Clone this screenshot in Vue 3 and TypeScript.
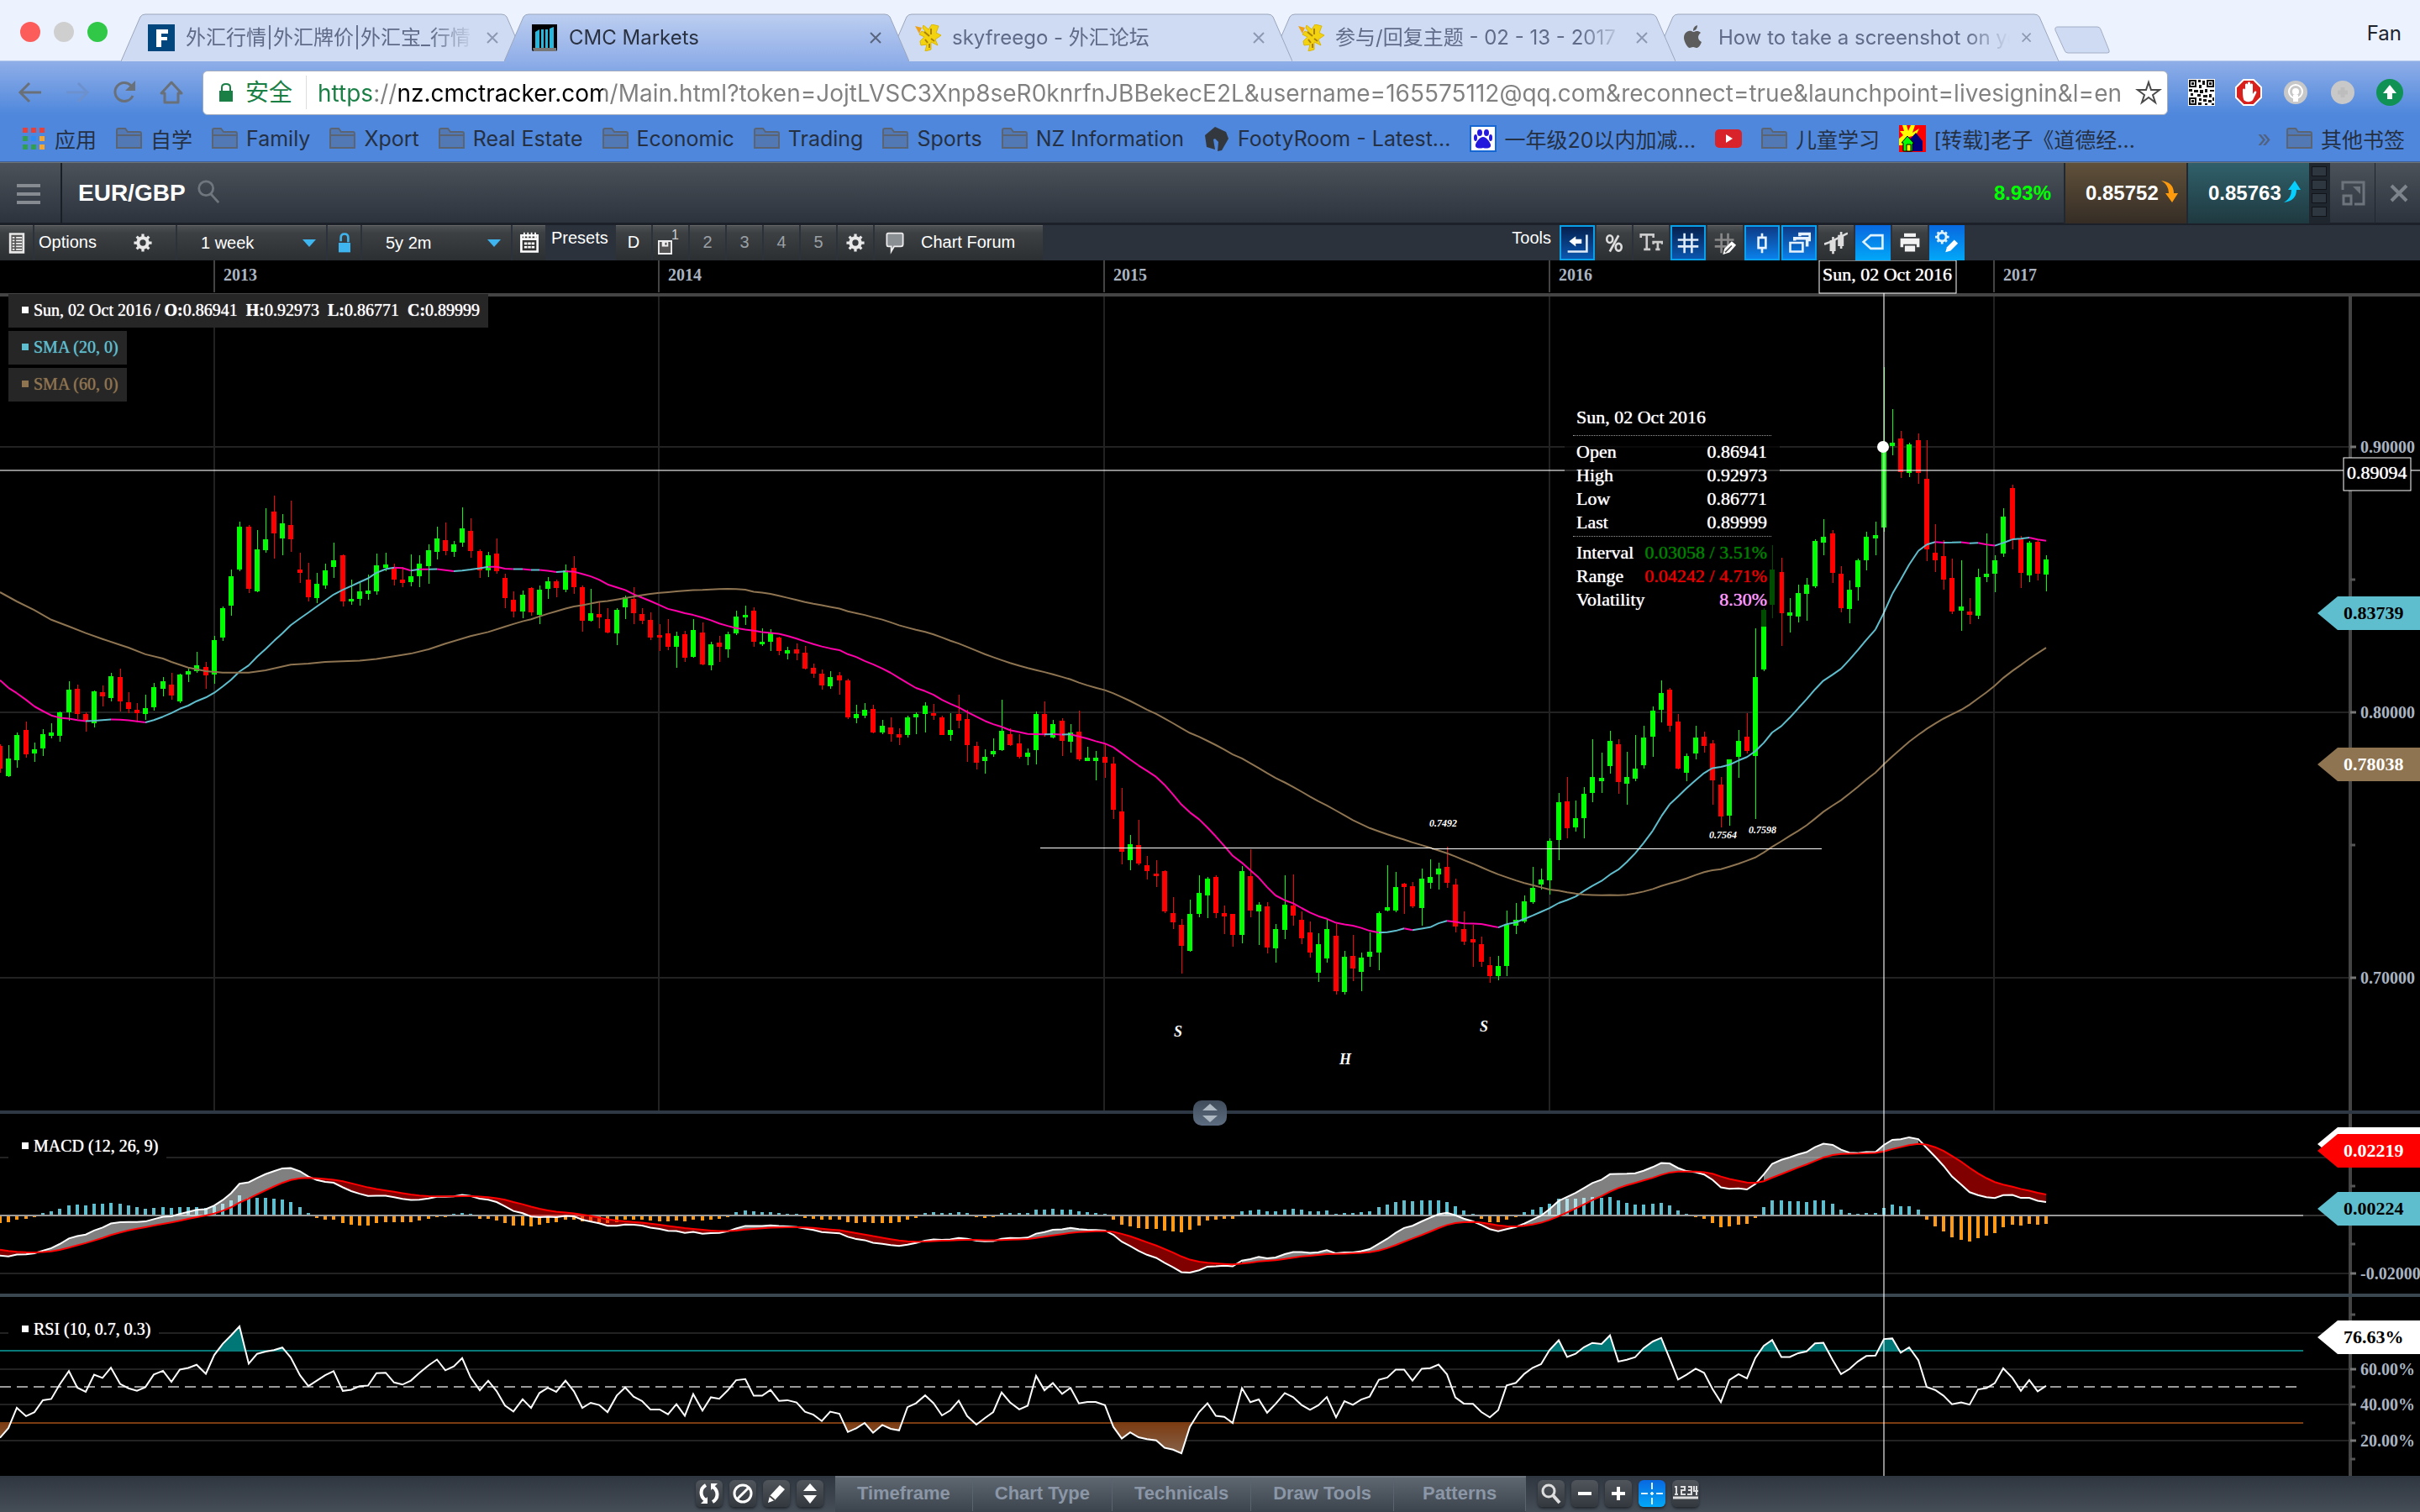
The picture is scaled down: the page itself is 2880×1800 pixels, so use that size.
<script setup lang="ts">
import { ref } from 'vue'

interface Candle { up: boolean; high: number; top: number; bottom: number; low: number; close: number }
interface Series { base: number; scale: number; rows: string }

const STEP = 10.19
const PERIODS = { fast: 12, slow: 26, signal: 9, rsi: 10 }

/* Weekly candles: direction, high, body top, body bottom, low */
const series: Series[] = [
  {
    base: 340, scale: 620 / 1568,
    rows: `r 1380 1385 1455 1468;g 1383 1425 1477 1480;g 1345 1353 1430 1452;r 1313 1338 1411 1421;g 1376 1396 1409 1434;g 1335 1350 1394 1416;g 1318 1345 1356 1362;g 1282 1285 1355 1374;g 1191 1216 1286 1310;r 1202 1215 1291 1305;
r 1286 1290 1313 1344;g 1220 1222 1318 1330;r 1203 1223 1237 1266;g 1166 1176 1242 1252;r 1152 1179 1252 1282;r 1224 1254 1274 1287;r 1258 1277 1287 1316;g 1232 1271 1290 1308;g 1197 1210 1269 1279;g 1178 1190 1214 1237;
r 1165 1201 1233 1247;g 1168 1170 1253 1256;g 1153 1161 1170 1194;g 1103 1144 1162 1166;r 1133 1148 1174 1215;g 1055 1066 1172 1200;g 966 971 1059 1070;g 856 874 964 994;g 711 726 855 861;r 722 727 914 925;
g 737 795 921 922;g 671 765 797 803;r 632 680 746 823;g 689 715 762 812;r 648 722 764 802;r 803 855 865 895;r 835 885 938 951;g 865 899 941 956;g 836 857 903 914;g 774 826 847 880;
r 810 812 950 965;g 885 943 952 961;g 892 921 943 963;g 871 918 928 946;g 806 843 921 931;g 804 840 850 860;r 837 850 885 904;r 848 885 895 908;g 809 876 892 905;g 812 838 874 908;
g 779 797 844 898;g 727 762 802 824;r 714 766 799 812;g 770 779 802 818;g 667 732 774 787;r 700 738 800 820;r 795 800 857 880;g 802 812 857 878;r 762 807 860 868;r 868 880 941 970;
r 921 947 980 998;g 917 930 982 1001;r 908 910 983 994;g 903 916 992 1018;g 877 890 912 943;r 886 891 911 938;g 840 857 916 924;r 815 851 908 928;r 903 908 1008 1043;g 913 986 1009 1012;
r 953 990 999 1031;r 970 1004 1044 1046;g 971 976 1048 1082;g 932 938 969 1004;r 909 943 986 1019;r 970 989 1010 1020;r 984 1007 1060 1067;r 1018 1051 1060 1099`,
  },
  {
    base: 600, scale: 700 / 1568,
    rows: `r 307 345 381 389;g 341 352 380 436;r 338 347 410 421;g 307 337 408 411;r 316 342 427 430;g 368 373 430 443;r 352 370 381 420;g 341 347 388 410;g 284 301 346 349;g 271 296 302 323;
r 276 284 367 381;g 332 367 375 378;g 334 346 367 391;r 353 357 392 403;g 380 390 398 414;r 371 388 399 416;r 379 396 439 441;r 426 437 452 464;r 441 452 483 496;g 446 461 486 493;
r 449 458 470 508;r 467 471 570 574;g 535 561 571 584;g 530 549 564 571;r 535 547 609 611;g 576 591 610 614;r 569 596 614 634;r 598 614 623 643;g 565 569 616 622;g 556 559 569 614;
g 529 538 559 609;r 534 557 565 576;r 565 569 615 616;g 558 603 616 632;r 508 559 579 597;r 549 573 643 688;r 633 645 690 707;g 653 674 685 719;g 625 659 668 675;g 522 604 656 659;
r 597 614 643 646;r 614 639 674 679;g 652 664 674 697;g 554 560 656 694;r 526 561 617 620;g 576 587 622 626;r 571 578 632 672;g 587 609 634 664;r 551 607 681 686;g 647 676 685 686;
g 659 676 685 736;r 639 674 690 731;r 674 692 815 840;r 757 820 928 960;g 883 908 950 976;r 843 909 959 964;r 938 964 979 1001;r 949 985 993 1022;r 976 979 1086 1090;r 1049 1090 1116 1133;
r 1107 1122 1178 1252;g 1055 1094 1192 1193;g 990 1036 1093 1102;g 994 998 1044 1105`,
  },
  {
    base: 860, scale: 1 / 3,
    rows: `r 547 553 681 698;r 654 681 692 755;r 684 685 760 800;g 514 532 760 789;r 453 548 672 697;g 643 651 676 795;r 643 658 803 826;g 721 738 806 859;g 546 650 740 773;r 543 654 690 725;
r 674 706 770 792;r 711 751 822 839;g 753 793 893 926;g 704 738 842 859;r 719 762 960 971;g 815 838 963 973;r 759 835 880 925;g 822 840 891 960;g 750 819 837 874;g 676 682 822 886;
g 510 661 673 676;g 535 588 672 678;r 573 577 588 684;r 571 585 657 663;g 523 557 663 725;g 490 551 573 594;g 502 521 542 597;r 444 515 573 590;r 557 579 730 751;r 674 739 783 795;
r 722 775 786 872;r 766 793 856 873;r 837 867 906 930;g 834 871 906 920;g 672 724 871 906;g 646 706 727 756;g 618 640 711 716;g 517 591 642 648;g 523 561 579 597`,
  },
  {
    base: 400, scale: 700 / 1568,
    rows: `g 1339 1346 1451 1489;g 1219 1244 1343 1398;r 1175 1240 1313 1339;g 1239 1285 1310 1322;g 1203 1221 1285 1339;g 1075 1175 1219 1243;g 1111 1179 1188 1219;g 1053 1080 1146 1166;r 1076 1089 1190 1221;g 1109 1175 1193 1249;
g 1065 1154 1181 1188;g 1040 1071 1144 1154;g 987 998 1069 1122;g 918 953 997 1030;r 939 942 1040 1055;r 1007 1029 1154 1156;g 1114 1119 1164 1188;g 1040 1071 1113 1130;r 1054 1069 1093 1111;r 1078 1087 1186 1251;
r 1177 1196 1282 1310;g 1128 1130 1279 1305;g 1051 1080 1123 1178;r 1006 1069 1107 1114;g 779 909 1120 1287;g 725 730 889 893;g 558 622 717 752;r 592 630 739 826;g 699 738 746 790;g 664 686 749 764;
g 645 663 687 759;g 541 546 668 672;g 489 535 550 585;r 517 526 631 659;r 613 635 725 738;g 652 676 728 767;g 594 597 670 706;g 522 535 597 624;g 495 531 540 585;g 83 295 511 522;
g 194 284 293 318;r 253 273 363 379;g 284 289 364 376;r 260 277 365 394;r 277 380 570 600;r 502 578 597 629;r 545 587 650 676;r 594 646 735 741;g 597 722 732 787;r 698 735 743 768;
g 620 642 747 754;g 526 633 643 656;g 585 598 634 684;g 459 482 581 588;r 396 405 541 570;r 533 540 632 671;g 546 551 638 656;r 541 548 634 652;g 585 595 636 680`,
  },
]

const candles: Candle[] = series.flatMap(({ base, scale, rows }) =>
  rows.split(';').map((row) => {
    const [dir, ...values] = row.trim().split(' ')
    const [high, top, bottom, low] = values.map((v) => Math.round(base + Number(v) * scale))
    const up = dir === 'g'
    return { up, high, top, bottom, low, close: base + Number(values[up ? 1 : 2]) * scale }
  }),
)
const closes = candles.map((c) => c.close)
const xAt = (i: number) => Math.round(i * STEP)

const candlePath = (up: boolean) =>
  candles.map((c, i) => c.up === up
    ? `M${xAt(i) - 3} ${c.top}h6V${Math.max(c.bottom, c.top + 3)}h-6zM${xAt(i)} ${c.high}h1V${c.low}h-1z` : '').join('')
const risingCandles = candlePath(true)
const fallingCandles = candlePath(false)

/* Moving averages: the first bars come from history that lies before the visible range */
const lead = (v: number) => 340 + v * 620 / 1568
const sma20Lead = [1188, 1211, 1227, 1247, 1267, 1281, 1294, 1301, 1304, 1308, 1311, 1310, 1308, 1306, 1307, 1309, 1312, 1315, 1308].map(lead)
const sma60Lead: [number, number][] = [[0, 923], [2, 951], [4, 977], [6, 1006], [8, 1026], [10, 1046], [12, 1064], [14, 1082], [15, 1090], [17, 1110], [19, 1123], [20, 1133], [22, 1150], [24, 1161], [26, 1165], [29, 1165], [31, 1158], [34, 1141], [36, 1138], [38, 1133], [42, 1129], [44, 1124], [46, 1116], [48, 1108], [50, 1095], [52, 1078], [55, 1055], [57, 1043]]
const average = (i: number, n: number) => closes.slice(i - n + 1, i + 1).reduce((a, b) => a + b, 0) / n
const at = (i: number, y: number) => `${xAt(i)} ${y.toFixed(1)}`

const sma20 = closes.map((_, i) => (i < 19 ? sma20Lead[i] : average(i, 20)))
const smaPath = (rising: boolean) =>
  sma20.slice(1).map((y, i) => (y <= sma20[i]) === rising ? `M${at(i, sma20[i])}L${at(i + 1, y)}` : '').join('')
const smaUp = smaPath(true)
const smaDown = smaPath(false)
const sma60 = [
  ...sma60Lead.map(([i, v]) => at(i, lead(v))),
  ...closes.map((_, i) => i).slice(59).map((i) => at(i, average(i, 60))),
].join(' ')

/* MACD */
const ZERO = 1447
const GAIN = 1.087
let fast = 851
let slow = 807
let sig = 37.4
const macd: number[] = []
const signal: number[] = []
closes.forEach((y, i) => {
  if (i) {
    fast += (y - fast) * 2 / (PERIODS.fast + 1)
    slow += (y - slow) * 2 / (PERIODS.slow + 1)
    sig += (fast - slow - sig) * 2 / (PERIODS.signal + 1)
  }
  macd.push(ZERO + (fast - slow) * GAIN)
  signal.push(ZERO + sig * GAIN)
})
const macdLine = macd.map((y, i) => at(i, y)).join(' ')
const signalLine = signal.map((y, i) => at(i, y)).join(' ')
let gainArea = ''
let lossArea = ''
for (let i = 1; i < macd.length; i++) {
  const a = macd[i - 1] - signal[i - 1]
  const b = macd[i] - signal[i]
  if (a * b >= 0) {
    const quad = `M${at(i - 1, macd[i - 1])}L${at(i, macd[i])}L${at(i, signal[i])}L${at(i - 1, signal[i - 1])}z`
    if (a + b < 0) gainArea += quad
    else lossArea += quad
  }
}
const bars = (positive: boolean) => macd.map((y, i) => {
  const d = signal[i] - y
  const h = Math.ceil(Math.abs(d)) + 1
  return (d > 0) === positive ? `M${xAt(i) - 2} ${ZERO}h4v${positive ? -h : h}h-4z` : ''
}).join('')
const positiveBars = bars(true)
const negativeBars = bars(false)

/* RSI, Wilder smoothing */
let avgGain = 3.84
let avgLoss = 13.95
const rsi = closes.map((y, i) => {
  if (i) {
    const change = closes[i - 1] - y
    avgGain += (Math.max(change, 0) - avgGain) / PERIODS.rsi
    avgLoss += (Math.max(-change, 0) - avgLoss) / PERIODS.rsi
  }
  return 1651 - (avgGain / (avgGain + avgLoss) * 100 - 50) * 2.137
})
const rsiLine = rsi.map((y, i) => at(i, y)).join(' ')
const rsiArea = `0 1651 ${rsiLine} ${xAt(239)} 1651`

const years = [[255, 2013], [784, 2014], [1314, 2015], [1844, 2016], [2373, 2017]]
const axis = [
  [532, '0.90000'], [848, '0.80000'], [1164, '0.70000'], [1516, '-0.02000'],
  [1630, '60.00%'], [1672, '40.00%'], [1715, '20.00%'],
] as [number, string][]
const minorTicks = [690, 1006, 1412, 1481, 1565, 1651, 1694, 1737]
const tags = [
  { y: 730, fill: '#5fbecd', ink: '#000', text: '0.83739' },
  { y: 910, fill: '#8e7450', ink: '#fff', text: '0.78038' },
  { y: 1362, fill: '#fff', ink: '#fff', text: '' },
  { y: 1370, fill: '#f00', ink: '#fff', text: '0.02219' },
  { y: 1439, fill: '#5fbecd', ink: '#000', text: '0.00224' },
  { y: 1592, fill: '#fff', ink: '#000', text: '76.63%' },
]
const quote = [['Open', '0.86941'], ['High', '0.92973'], ['Low', '0.86771'], ['Last', '0.89999']]
const stats = [['Interval', '0.03058 / 3.51%', 'green'], ['Range', '0.04242 / 4.71%', 'red'], ['Volatility', '8.30%', 'pink']]

/* Icons, drawn on a 32 unit square */
const gear = '<circle cx="16" cy="16" r="7" fill="none" stroke="#e8e8e8" stroke-width="5"/><path d="M16 3v5M16 24v5M3 16h5M24 16h5M7 7l3 3M22 22l3 3M25 7l-3 3M10 22l-3 3" stroke="#e8e8e8" stroke-width="4"/>'
const coin = '<path fill="#f3d210" stroke="#d9b70a" d="M11 1l6 5 4-6 8 2-3 8 6 3-7 5 3 7-8-4v9l-7 2 2-8-7 1-1-5 5-5-6-3 3-4 5 2-4-6z"/><path fill="#f0a010" d="M1 2l8 2-3 7z"/><path stroke="#a98204" stroke-width="2" d="M12 9l6 5M20 5v7M13 18l3 4M20 17l4 3M18 23v5"/>'
const icons: Record<string, string> = {
  gear,
  fx: '<path fill="#01467c" d="M0 0h32v32H0z"/><path fill="#fff" d="M10 6h14v5h-8v4h7v4h-7v8h-6z"/>',
  cmc: '<path fill="#000" d="M1 0h30v30q0 2-2 2H3q-2 0-2-2z"/><path fill="#777" d="M2 28h28v4H3z"/><path fill="#29b6dc" d="M5 9l5-3v22H5zM12 6h3v22h-3zM17 6h3v22h-3zM22 5l5-2v25h-5z"/>',
  coin,
  apple: '<path fill="#5c5c5c" d="M16 9c2-1 5-2 8 1-5 4-3 9 1 11-2 5-4 7-6 7-2 0-2-1-4-1s-3 1-4 1c-3 0-7-8-7-12 0-7 6-9 9-8 2 1 2 1 3 1zM15 8c0-4 2-6 5-7 0 4-2 6-5 7z"/>',
  back: '<path d="M29 16H5M15 5L4 16l11 11" fill="none" stroke="#6a7078" stroke-width="3"/>',
  forward: '<path d="M3 16h24M17 5l11 11-11 11" fill="none" stroke="#6d91cd" stroke-width="3"/>',
  reload: '<path d="M26 20A11 11 0 1 1 24 8" fill="none" stroke="#6a7078" stroke-width="3"/><path d="M29 2v12H17z" fill="#6a7078"/>',
  home: '<path d="M16 4L4 17h4v11h16V17h4z" fill="none" stroke="#6a7078" stroke-width="3" stroke-linejoin="round"/>',
  star: '<path d="M16 4l3 9h10l-8 6 3 9-8-6-8 6 3-9-8-6h10z" fill="none" stroke="#4a4a4a" stroke-width="2"/>',
  qr: '<path fill="#fff" d="M0 0h32v32H0z"/><path fill="#111" fill-rule="evenodd" d="M1 1h9v9H1zm2 2v5h5V3zM22 1h9v9h-9zm2 2v5h5V3zM1 22h9v9H1zm2 2v5h5v-5zM4 4h3v3H4zM25 4h3v3h-3zM4 25h3v3H4zM12 1h3v3h-3zM17 2h3v5h-3zM13 7h3v4h-3zM1 12h4v3H1zM7 13h5v3H7zM3 17h3v3H3zM14 13h4v4h-4zM20 12h3v4h-3zM26 13h5v2h-5zM11 18h4v3h-4zM18 19h5v3h-5zM25 18h3v4h-3zM29 22h2v4h-2zM13 23h3v3h-3zM18 24h4v3h-4zM24 25h4v3h-4zM12 28h4v3h-4zM20 29h3v2h-3zM28 29h3v2h-3z"/>',
  hand: '<path fill="#d8201c" stroke="#fff" stroke-width="2" d="M10 1h12l9 9v12l-9 9H10l-9-9V10z"/><path fill="#fff" d="M9 13c0-2 3-2 3 0v3V7c0-2 3-2 3 0v7V5c0-2 3-2 3 0v9V7c0-2 3-2 3 0v11l2-3c2-1 3 0 2 2l-4 8c-2 3-10 3-11-1-1-3-1-7-1-11z"/>',
  beacon: '<circle cx="16" cy="16" r="14" fill="#c8c8c8"/><circle cx="16" cy="15" r="8" fill="none" stroke="#fff" stroke-width="2"/><circle cx="16" cy="15" r="4" fill="#fff"/><path d="M13 19h6v8h-6z" fill="#fff"/>',
  blank: '<circle cx="16" cy="16" r="14" fill="#c8c8c8"/><path d="M16 10v12M10 16h12" stroke="#bdbdbd" stroke-width="5"/>',
  up: '<circle cx="16" cy="16" r="16" fill="#0f9254"/><path d="M16 7l8 10h-5v7h-6v-7H8z" fill="#fff"/>',
  apps: '<path fill="#e8413a" d="M3 3h6v6H3zM13 3h6v6h-6zM23 3h6v6h-6z"/><path fill="#30a050" d="M3 13h6v6H3zM3 23h6v6H3zM13 23h6v6h-6z"/><path fill="#2b8cf4" d="M13 13h6v6h-6z"/><path fill="#f4a72c" d="M23 13h6v6h-6zM23 23h6v6h-6z"/>',
  folder: '<path d="M1 27V6q0-2 2-2h8l3 4h14q2 0 2 2v17zM1 12h29" fill="#5379b5" stroke="#5b6473" stroke-width="2"/>',
  footy: '<path fill="#33383f" d="M14 2l13 6 3 8-8 14-5 1 1-11-4-4-2 1 2 12-10-3-2-14z"/>',
  baidu: '<path fill="#fff" stroke="#1567d3" stroke-width="2" d="M1 1h30v30H1z"/><g fill="#2319dc"><ellipse cx="12" cy="9" rx="3" ry="4"/><ellipse cx="20" cy="9" rx="3" ry="4"/><ellipse cx="7" cy="15" rx="2" ry="4"/><ellipse cx="25" cy="15" rx="2" ry="4"/><path d="M16 14c4 0 8 6 9 9 1 5-5 5-9 4-4 1-10 1-9-4 1-3 5-9 9-9z"/></g>',
  tube: '<rect x="0" y="5" width="32" height="22" rx="5" fill="#d8232a"/><path d="M13 11l8 5-8 5z" fill="#fff"/>',
  house: '<path fill="#f00" d="M0 0h32v32H0z"/><path fill="#ff0" d="M4 0h5l2 7 3-7h5l-3 9 8-5-4 8-8 2-8 10H0v-8l5-4-4-5h5z"/><path fill="#00007c" d="M12 18l8-9 8 10v12H14z"/><path fill="#0f0" stroke="#000" d="M3 21l7-8 8 9h-2v9H5V21z"/><path fill="#ff0" stroke="#000" d="M9 23h5v8H9z"/>',
  search: '<circle cx="13" cy="12" r="9" fill="none" stroke="#70767d" stroke-width="3"/><path d="M19 19l10 11" stroke="#70767d" stroke-width="3"/>',
  list: '<path d="M7 4h18v25H7z" fill="#555" stroke="#e8e8e8" stroke-width="3"/><path d="M10 9h3M10 13h3M10 17h3M10 21h3M10 25h3M15 9h8M15 13h8M15 17h8M15 21h8M15 25h8" stroke="#eee" stroke-width="2"/>',
  unlock: '<path d="M8 16h16v13H8z" fill="#3fb5f0"/><path d="M11 14V9q0-5 5-5t5 5v6" fill="none" stroke="#3fb5f0" stroke-width="3"/>',
  calendar: '<path d="M5 6h22v22H5z" fill="#333" stroke="#fff" stroke-width="3"/><path d="M9 2v8M14 2v8M19 2v8M24 2v8" stroke="#fff" stroke-width="2"/><path d="M5 11h22" stroke="#fff" stroke-width="3"/><path d="M9 17h4M14 17h4M19 17h4M9 22h4M14 22h4M19 22h4" stroke="#fff" stroke-width="3"/>',
  chat: '<path d="M5 5q0-2 2-2h18q2 0 2 2v13q0 3-3 3H15l-4 7v-7H7q-2 0-2-3z" fill="#8a8f94" stroke="#eee" stroke-width="2"/>',
  popout: '<path d="M3 12V3h25v26H17" fill="none" stroke="#6d747c" stroke-width="3"/><path d="M4 19h9v10H4z" fill="none" stroke="#6d747c" stroke-width="3"/><path d="M15 8h9v9z" fill="#6d747c"/>',
  close: '<path d="M7 7l18 18M25 7L7 25" stroke="#7d848c" stroke-width="4"/>',
  snap: '<path d="M3 28h26V5" fill="none" stroke="#dfeaf8" stroke-width="3"/><path d="M5 14l9-7v4h8v6h-8v4z" fill="#fff"/>',
  percent: '<ellipse cx="10" cy="11" rx="4" ry="5" fill="none" stroke="#ddd" stroke-width="3"/><ellipse cx="22" cy="22" rx="4" ry="5" fill="none" stroke="#ddd" stroke-width="3"/><path d="M22 6L10 28" stroke="#ddd" stroke-width="3"/>',
  type: '<path d="M2 9V5h17v4M10 5v20M6 25h9M19 18v-3h12v3M25 15v10M22 25h6" fill="none" stroke="#ccc" stroke-width="3"/>',
  grid: '<path d="M11 3v27M21 3v27M2 12h28M2 21h28" stroke="#dfeaf8" stroke-width="3"/>',
  gridPick: '<path d="M11 3v27M20 3v18M2 12h26M2 21h16" stroke="#888" stroke-width="3"/><path d="M13 32l2-8 10-10 6 5-9 10z" fill="#fff"/><path d="M16 29l9-9" stroke="#555" stroke-width="2"/>',
  candle: '<path d="M16 3v6M16 23v7M11 9h10v14H11z" fill="none" stroke="#e6f2ff" stroke-width="3"/>',
  stack: '<path d="M4 16h17v12H4z" fill="none" stroke="#e6f2ff" stroke-width="3"/><path d="M10 13v-3h17v11M17 7V4h14v10" fill="none" stroke="#e6f2ff" stroke-width="4"/>',
  compare: '<path d="M12 8v23M23 1v23M9 14h5v12H9zM20 7h5v12h-5z" fill="#3a3d40" stroke="#ddd" stroke-width="3"/><path d="M0 18l8-3 12-6 12-6" fill="none" stroke="#ddd" stroke-width="3"/>',
  label: '<path d="M13 7h16v18H13L3 16z" fill="none" stroke="#dff2ff" stroke-width="3"/>',
  print: '<path d="M8 3h16v5H8zM3 10h26v12h-4v-4H7v4H3zM9 20h14v8H9z" fill="#f2f2f2"/>',
  setup: '<g transform="translate(-1 -2) scale(.8)"><circle cx="13" cy="14" r="7" fill="none" stroke="#dff2ff" stroke-width="4"/><path d="M13 2v5M13 21v5M1 14h5M20 14h5M5 6l3 3M18 19l3 3M21 6l-3 3M8 19l-3 3" stroke="#dff2ff" stroke-width="4"/></g><path d="M14 30l2-7 10-10 5 5-10 10z" fill="#fff"/>',
  cycle: '<path d="M12 6q-7 4-5 12 1 4 5 6M20 26q7-4 5-12-1-4-5-6" fill="none" stroke="#fff" stroke-width="4"/><path d="M14 20v8H6zM18 12V4h8z" fill="#fff"/>',
  none: '<circle cx="16" cy="16" r="10" fill="none" stroke="#fff" stroke-width="3"/><path d="M9 23L23 9" stroke="#fff" stroke-width="3"/>',
  pencil: '<path d="M6 27l2-8L20 6l6 5-12 13z" fill="#fff"/><path d="M8 19l6 5" stroke="#444" stroke-width="2"/>',
  updown: '<path d="M8 13l8-9 8 9zM8 18h16l-8 10z" fill="#fff"/>',
  zoom: '<circle cx="13" cy="13" r="7" fill="none" stroke="#ddd" stroke-width="3"/><path d="M18 18l8 9" stroke="#ddd" stroke-width="4"/>',
  minus: '<path d="M8 16h16" stroke="#fff" stroke-width="4"/>',
  plus: '<path d="M8 16h16M16 8v16" stroke="#fff" stroke-width="4"/>',
  cross: '<path d="M16 3v8M16 14v4M16 21v8M3 16h8M14 16h4M21 16h8" stroke="#dff2ff" stroke-width="2"/>',
  ruler: '<path d="M1 21h30" stroke="#ddd" stroke-width="3"/><path d="M5 7v11M3 8h2M3 17h4M10 8h5v4h-4v5h5M19 8h4v9h-5M19 12h3M26 7v6h5M29 7v11" fill="none" stroke="#ddd" stroke-width="2"/>',
}

const tabs = [
  { icon: 'fx', title: '外汇行情|外汇牌价|外汇宝_行情' },
  { icon: 'cmc', title: 'CMC Markets', active: true },
  { icon: 'coin', title: 'skyfreego - 外汇论坛' },
  { icon: 'coin', title: '参与/回复主题 - 02 - 13 - 2017' },
  { icon: 'apple', title: 'How to take a screenshot on yo' },
]
const bookmarks = [
  ['apps', '应用'], ['folder', '自学'], ['folder', 'Family'], ['folder', 'Xport'], ['folder', 'Real Estate'],
  ['folder', 'Economic'], ['folder', 'Trading'], ['folder', 'Sports'], ['folder', 'NZ Information'],
  ['footy', 'FootyRoom - Latest...'], ['baidu', '一年级20以内加减...'], ['tube', ''], ['folder', '儿童学习'], ['house', '[转载]老子《道德经...'],
]
const extensions = ['qr', 'hand', 'beacon', 'blank', 'up']
const tools = [
  ['snap', 'navy'], ['percent', ''], ['type', ''], ['grid', 'navy'], ['gridPick', ''], ['candle', 'blue'],
  ['stack', 'blue'], ['compare', ''], ['label', 'sky'], ['print', ''], ['setup', 'sky'],
]
const menus = ['Timeframe', 'Chart Type', 'Technicals', 'Draw Tools', 'Patterns']
const url = ref('https://nz.cmctracker.com/Main.html?token=JojtLVSC3Xnp8seR0knrfnJBBekecE2L&username=165575112@qq.com&reconnect=true&launchpoint=livesignin&l=en')
const interval = ref('1 week')
const span = ref('5y 2m')
</script>

<template>
  <div class="window">
    <header class="browser">
      <div class="tabstrip">
        <div class="lights"><i class="red" /><i class="grey" /><i class="green" /></div>
        <nav class="tabs">
          <div v-for="(t, i) in tabs" :key="i" class="tab" :class="{ active: t.active }" :style="{ zIndex: t.active ? 9 : 8 - i }">
            <svg class="shape" viewBox="0 0 482 57" preserveAspectRatio="none">
              <defs><linearGradient id="tabfill" x2="0" y2="1"><stop stop-color="#bccef0" /><stop offset="1" stop-color="#90aee8" /></linearGradient></defs>
              <path d="M0 57L23 4Q25 1 29 1H453Q457 1 459 4L482 57" :fill="t.active ? 'url(#tabfill)' : '#cfdbf2'" stroke="#9aa6bd" stroke-width="1" />
            </svg>
            <svg class="icon" viewBox="0 0 32 32" v-html="icons[t.icon]" />
            <span class="title">{{ t.title }}</span>
            <button class="shut" aria-label="Close tab"><svg viewBox="0 0 16 16"><path d="M2 2l12 12M14 2L2 14" stroke="currentColor" stroke-width="2" /></svg></button>
          </div>
        </nav>
        <svg class="newtab" viewBox="0 0 68 34"><path d="M5 1H52Q55 1 56 4L66 29Q67 32 64 32H17Q14 32 13 29L2 5Q1 1 5 1z" fill="#cfdbf2" stroke="#a3aec4" /></svg>
        <span class="profile">Fan</span>
      </div>
      <div class="addressbar">
        <button v-for="n in ['back', 'forward', 'reload', 'home']" :key="n" class="nav" :aria-label="n"><svg class="icon" viewBox="0 0 32 32" v-html="icons[n]" /></button>
        <label class="omnibox">
          <svg class="lock" viewBox="0 0 18 24"><path d="M1 10h16v13H1z" fill="#1a7f45" /><path d="M4 11V6q0-4 5-4t5 4v5" fill="none" stroke="#1a7f45" stroke-width="2" /></svg>
          <span class="secure">安全</span>
          <input v-model="url" type="text" aria-label="Address">
          <svg class="icon" viewBox="0 0 32 32" v-html="icons.star" />
        </label>
        <div class="extensions"><svg v-for="n in extensions" :key="n" class="icon" viewBox="0 0 32 32" v-html="icons[n]" /></div>
      </div>
      <nav class="bookmarks">
        <a v-for="([icon, name], i) in bookmarks" :key="i" href="#" :aria-label="name || icon"><svg class="icon" viewBox="0 0 32 32" v-html="icons[icon]" /><span v-if="name">{{ name }}</span></a>
        <span class="more">»</span>
        <a href="#"><svg class="icon" viewBox="0 0 32 32" v-html="icons.folder" /><span>其他书签</span></a>
      </nav>
    </header>

    <main class="app">
      <div class="instrument">
        <button class="menu" aria-label="Menu"><i /><i /><i /></button>
        <h1>EUR/GBP</h1>
        <svg class="icon find" viewBox="0 0 32 32" v-html="icons.search" />
        <span class="change">8.93%</span>
        <button class="price sell">0.85752<svg viewBox="0 0 22 26"><path d="M1 0Q16 2 16 15h5l-7 11-8-11h4Q10 5 1 0z" fill="#ff9a0c" /></svg></button>
        <button class="price buy">0.85763<svg viewBox="0 0 22 26"><path d="M1 26Q16 24 16 11h5L14 0 6 11h4Q10 21 1 26z" fill="#06cfff" /></svg></button>
        <div class="slots"><i /><i /><i /><i /></div>
        <button class="win" aria-label="Pop out"><svg class="icon" viewBox="0 0 32 32" v-html="icons.popout" /></button>
        <button class="win" aria-label="Close"><svg class="icon" viewBox="0 0 32 32" v-html="icons.close" /></button>
      </div>

      <div class="toolbar">
        <button class="btn narrow" aria-label="List"><svg class="icon" viewBox="0 0 32 32" v-html="icons.list" /></button>
        <button class="btn options">Options<svg class="icon" viewBox="0 0 32 32" v-html="icons.gear" /></button>
        <div class="btn pick"><select v-model="interval" aria-label="Interval"><option>1 week</option><option>1 day</option></select><i /></div>
        <button class="btn narrow" aria-label="Unlock"><svg class="icon" viewBox="0 0 32 32" v-html="icons.unlock" /></button>
        <div class="btn pick"><select v-model="span" aria-label="Range"><option>5y 2m</option><option>1y</option></select><i /></div>
        <button class="btn narrow" aria-label="Calendar"><svg class="icon" viewBox="0 0 32 32" v-html="icons.calendar" /></button>
        <span class="caption">Presets</span>
        <button class="btn sq">D</button>
        <button class="btn sq save"><svg viewBox="0 0 18 18"><path d="M1 1h16v16H1z" fill="#555" stroke="#eee" stroke-width="2" /><path d="M5 2h8v6H5z" fill="#eee" /><path d="M10 3v3" stroke="#444" stroke-width="2" /></svg><sup>1</sup></button>
        <button v-for="n in [2, 3, 4, 5]" :key="n" class="btn sq dim">{{ n }}</button>
        <button class="btn sq" aria-label="Settings"><svg class="icon small" viewBox="0 0 32 32" v-html="icons.gear" /></button>
        <button class="btn forum"><svg class="icon" viewBox="0 0 32 32" v-html="icons.chat" />Chart Forum</button>
        <span class="caption tools">Tools</span>
        <button v-for="[n, tone] in tools" :key="n" class="btn sq" :class="tone" :aria-label="n"><svg class="icon" viewBox="0 0 32 32" v-html="icons[n]" /></button>
      </div>

      <section class="chart">
        <svg class="plot" viewBox="0 310 2880 1447">
          <defs>
            <clipPath id="over"><path d="M0 1545H2880V1608H0z" /></clipPath>
            <clipPath id="under"><path d="M0 1694H2880V1757H0z" /></clipPath>
            <linearGradient id="burn" x1="0" y1="1694" x2="0" y2="1732" gradientUnits="userSpaceOnUse"><stop stop-color="#7c3c12" /><stop offset="1" stop-color="#86644c" /></linearGradient>
            <linearGradient id="knob" x2="0" y2="1"><stop stop-color="#3f4b5a" /><stop offset="1" stop-color="#5d6c80" /></linearGradient>
          </defs>

          <g stroke="#222" stroke-width="2">
            <path v-for="y in [532, 848, 1164, 1378, 1516, 1587, 1630, 1672, 1715]" :key="y" :d="`M0 ${y}H2797`" />
            <path v-for="[x] in years" :key="x" :d="`M${x} 352V1322`" />
          </g>
          <path d="M0 351H2880" stroke="#444" stroke-width="4" />
          <g v-for="[x, y] in years" :key="y">
            <path :d="`M${x} 310V348`" stroke="#444" stroke-width="2" />
            <text class="scale" :x="x + 11" y="334">{{ y }}</text>
          </g>

          <path :d="risingCandles" fill="#0f0" />
          <path :d="fallingCandles" fill="#f00" />
          <g fill="none" stroke-width="2">
            <path :d="smaUp" stroke="#5fbecd" />
            <path :d="smaDown" stroke="#f0a" />
            <polyline :points="sma60" stroke="#8e7450" />
          </g>
          <path d="M1238 1009h466v1h464v1h-464v-1h-466z" fill="#fff" />
          <g class="note">
            <text x="1701" y="984">0.7492</text>
            <text x="2034" y="998">0.7564</text>
            <text x="2081" y="992">0.7598</text>
          </g>
          <g class="note big">
            <text x="1397" y="1234">S</text>
            <text x="1594" y="1267">H</text>
            <text x="1761" y="1228">S</text>
          </g>

          <path :d="positiveBars" fill="#5fbecd" />
          <path :d="negativeBars" fill="#ff9a18" />
          <path d="M0 1447H2741" stroke="#999" stroke-width="2" />
          <path d="M2741 1447H2797" stroke="#333" stroke-width="2" />
          <path :d="gainArea" fill="#fff" fill-opacity=".5" />
          <path :d="lossArea" fill="#f00" fill-opacity=".5" />
          <polyline :points="macdLine" fill="none" stroke="#fff" stroke-width="2" />
          <polyline :points="signalLine" fill="none" stroke="#f00" stroke-width="2" />

          <polygon :points="rsiArea" fill="#077" clip-path="url(#over)" />
          <polygon :points="rsiArea" fill="url(#burn)" clip-path="url(#under)" />
          <path d="M0 1608H2741" stroke="#087a7a" stroke-width="2" />
          <path d="M0 1694H2741" stroke="#7c3c12" stroke-width="2" />
          <path d="M0 1651H2733" stroke="#999" stroke-width="2" stroke-dasharray="13 7" />
          <polyline :points="rsiLine" fill="none" stroke="#fff" stroke-width="2" />

          <path d="M2797 352V1757" stroke="#444" stroke-width="4" />
          <path d="M0 1324H2880" stroke="#2e3844" stroke-width="4" />
          <path d="M0 1542H2880" stroke="#3a4650" stroke-width="4" />
          <rect x="1420" y="1310" width="40" height="30" rx="10" fill="url(#knob)" />
          <path d="M1431 1322l9-8 9 8zM1431 1328h18l-9 8z" fill="#aeb8c2" />

          <g v-for="[y, t] in axis" :key="t">
            <path :d="`M2797 ${y}h7`" stroke="#777" stroke-width="3" />
            <text class="scale" x="2809" :y="y + 7">{{ t }}</text>
          </g>
          <path v-for="y in minorTicks" :key="y" :d="`M2797 ${y}h6`" stroke="#555" stroke-width="3" />

          <g stroke="#fff" stroke-opacity=".55" stroke-width="2">
            <path d="M0 560H2880" />
            <path d="M2242 310V1757" />
          </g>
          <circle cx="2241" cy="532" r="7" fill="#fff" />
          <g v-for="t in tags" :key="t.y">
            <path :d="`M2758 ${t.y}L2782 ${t.y - 20}H2880V${t.y + 20}H2782z`" :fill="t.fill" />
            <text class="tag" x="2789" :y="t.y + 7" :fill="t.ink">{{ t.text }}</text>
          </g>
          <g fill="#000" stroke="#fff">
            <rect x="2789" y="545" width="80" height="39" />
            <rect x="2165" y="310" width="163" height="39" />
          </g>
          <text class="cursor" x="2793" y="570">0.89094</text>
          <text class="cursor" x="2169" y="334">Sun, 02 Oct 2016</text>
        </svg>

        <div class="legend">
          <p><i />Sun, 02 Oct 2016 / <b>O:</b>0.86941&nbsp; <b>H:</b>0.92973&nbsp; <b>L:</b>0.86771&nbsp; <b>C:</b>0.89999</p>
          <p class="cyan"><i />SMA (20, 0)</p>
          <p class="sand"><i />SMA (60, 0)</p>
        </div>
        <p class="legend-line macd"><i />MACD (12, 26, 9)</p>
        <p class="legend-line rsi"><i />RSI (10, 0.7, 0.3)</p>

        <div class="tooltip">
          <strong>Sun, 02 Oct 2016</strong>
          <dl><div v-for="[k, v] in quote" :key="k"><dt>{{ k }}</dt><dd>{{ v }}</dd></div></dl>
          <dl><div v-for="[k, v, c] in stats" :key="k"><dt>{{ k }}</dt><dd :class="c">{{ v }}</dd></div></dl>
        </div>
      </section>

      <footer class="dock">
        <div class="group"><button v-for="n in ['cycle', 'none', 'pencil', 'updown']" :key="n" :aria-label="n"><svg class="icon" viewBox="0 0 32 32" v-html="icons[n]" /></button></div>
        <nav><button v-for="m in menus" :key="m">{{ m }}</button></nav>
        <div class="group"><button v-for="n in ['zoom', 'minus', 'plus', 'cross', 'ruler']" :key="n" :class="{ on: n === 'cross' }" :aria-label="n"><svg class="icon" viewBox="0 0 32 32" v-html="icons[n]" /></button></div>
      </footer>
    </main>
  </div>
</template>

<style>
body { background: #000; }
</style>

<style scoped>
* { box-sizing: border-box; }
button, select, input { border: 0; padding: 0; margin: 0; background: none; font: inherit; color: inherit; }
p, h1, dl, dd { margin: 0; }
a { color: inherit; text-decoration: none; }
svg { display: block; flex: none; }
.icon { width: 32px; height: 32px; }
.window { width: 100%; font-family: "Liberation Sans", Arial, sans-serif; }

.browser { font-family: Inter, "Noto Sans CJK SC", sans-serif; font-size: 24px; background: linear-gradient(#8faee8 73px, #4e87dc 137px); border-bottom: 1px solid #3f5f94; height: 193px; }
.tabstrip { display: flex; height: 73px; background: #ecf2fe; align-items: flex-end; border-bottom: 1px solid #b5c8ee; }
.lights { display: flex; gap: 16px; width: 144px; padding-left: 24px; padding-bottom: 22px; }
.lights i { width: 24px; height: 24px; border-radius: 50%; }
.lights .red { background: #fc5d5a; }
.lights .grey { background: #cfcfcf; }
.lights .green { background: #30c846; }
.tabs { display: flex; height: 57px; margin-bottom: -1px; }
.tab { position: relative; display: flex; align-items: center; width: 482px; height: 57px; margin-right: -26px; padding: 0 32px; color: #5f6b88; flex: none; }
.tab > * { position: relative; }
.tab .shape { position: absolute; inset: 0; width: 100%; height: 100%; }
.tab .title { flex: 1; margin: 0 2px 0 13px; line-height: 36px; white-space: nowrap; mask-image: linear-gradient(90deg, #000 82%, transparent 97%); }
.tab.active { color: #2a3242; }
.shut { width: 16px; height: 16px; color: #8d98b2; }
.active .shut { color: #59657e; }
.newtab { width: 68px; height: 34px; margin: 0 0 7px 20px; }
.profile { margin: 0 22px 14px auto; color: #20242c; line-height: 36px; }
.addressbar { display: flex; align-items: center; height: 74px; padding: 0 20px; gap: 24px; }
.nav + .omnibox { margin-left: -3px; }
.omnibox { display: flex; align-items: center; flex: 1; height: 53px; background: #fff; border: 1px solid #a3adbd; border-radius: 6px; padding: 0 6px 0 18px; font-size: 28px; }
.lock { width: 18px; height: 24px; }
.secure { margin-left: 14px; padding-right: 16px; line-height: 40px; border-right: 1px solid #ddd; color: #1a7f45; font-size: 28px; }
.omnibox input { flex: 1; min-width: 0; height: 48px; margin-left: 13px; padding-top: 2px; color: transparent; background: linear-gradient(90deg, #1a7f45 66px, #808080 66px, #808080 94px, #000 94px, #000 340px, #808080 340px); background-clip: text; -webkit-background-clip: text; }
.extensions { display: flex; gap: 24px; }
.bookmarks { display: flex; align-items: center; height: 44px; margin-top: -4px; padding: 0 18px 0 24px; color: #253043; font-size: 25px; }
.bookmarks a { display: flex; align-items: center; gap: 9px; margin-right: 23px; white-space: nowrap; }
.bookmarks a:last-child { margin-right: 0; }
.more { margin-left: auto; margin-right: 18px; font-size: 28px; color: #52617c; }

.instrument { display: flex; align-items: center; height: 72px; background: linear-gradient(#4b5259, #2c333d); border-top: 1px solid #6d747a; color: #fff; }
.menu { width: 74px; height: 72px; border-right: 2px solid #1a1f26; display: flex; flex-direction: column; gap: 6px; padding: 25px 0 0 20px; }
.menu i { width: 28px; height: 4px; background: #858b91; }
h1 { margin-left: 19px; font-size: 28px; line-height: 32px; font-weight: bold; }
.find { width: 30px; height: 30px; margin-left: 12px; margin-bottom: 4px; }
.change { margin-left: auto; margin-right: 15px; color: #0f0; font-size: 24px; font-weight: bold; }
.price { display: flex; align-items: center; width: 146px; height: 72px; padding-left: 24px; font-size: 24px; font-weight: bold; border-left: 2px solid #22282f; }
.price svg { width: 22px; height: 26px; margin: -4px 0 0 2px; }
.sell { background: linear-gradient(#60513a, #352d25); }
.buy { background: linear-gradient(#30606a, #1f3940); }
.slots { display: flex; flex-direction: column; gap: 4px; width: 24px; height: 72px; padding: 4px 0 0 3px; background: #20262d; }
.slots i { width: 18px; height: 12px; background: #2e363f; border: 1px solid #11151a; }
.win { width: 54px; height: 72px; border-left: 1px solid #20262d; padding-left: 12px; }

.toolbar { display: flex; align-items: flex-start; height: 45px; gap: 2px; padding-right: 542px; background: #2b323c; border-top: 3px solid #1b2029; color: #fff; font-size: 20px; }
.btn { height: 42px; display: flex; align-items: center; flex: none; padding-bottom: 2px; background: linear-gradient(#4f5254, #3d4043 20%, #2c2f32); border-top: 1px solid #666; white-space: nowrap; }
.sq { width: 42px; justify-content: center; }
.narrow { width: 39px; justify-content: center; }
.btn .icon { width: 28px; height: 28px; }
.btn .icon.small, .options .icon { width: 26px; height: 26px; }
.options { width: 168px; padding-left: 5px; }
.options .icon { margin-left: 42px; }
.pick { width: 177px; position: relative; }
.pick select { appearance: none; width: 100%; height: 40px; padding-left: 28px; }
.pick i { position: absolute; right: 12px; top: 16px; border: 8px solid transparent; border-top: 9px solid #3fb5f0; border-bottom: 0; }
.caption { width: 80px; padding-left: 5px; line-height: 30px; }
.caption.tools { width: auto; margin-left: auto; margin-right: 8px; }
.save { position: relative; justify-content: flex-start; padding: 10px 0 0 6px; }
.save svg { width: 17px; height: 17px; }
.save sup { position: absolute; left: 22px; top: 2px; font-size: 16px; color: #ccc; }
.dim { color: #9aa0a6; }
.forum { width: 200px; padding-left: 8px; gap: 15px; }
.forum .icon { width: 32px; height: 28px; }
.navy { background: linear-gradient(#06204e, #0a57b0); border: 2px solid #0aa0e8; padding: 0; }
.blue { background: linear-gradient(#0d3a86, #0a80ea); border: 2px solid #0aa0f0; padding: 0; }
.sky { background: linear-gradient(#0868e0, #02a8f8); border: 0; }

.chart { position: relative; background: #000; font-family: "Liberation Serif", "Times New Roman", serif; }
.plot { width: 100%; height: auto; }
.scale { font-size: 20px; font-weight: bold; fill: #a9b3c1; }
.tag { font-size: 22px; font-weight: bold; }
.cursor { font-size: 22px; fill: #fff; text-shadow: 0 0 1px #fff; }
.note { font-size: 12px; font-weight: bold; font-style: italic; fill: #fff; }
.note.big { font-size: 18px; }
.legend { position: absolute; left: 10px; top: 40px; display: flex; flex-direction: column; align-items: flex-start; gap: 4px; }
.legend p, .legend-line { display: flex; align-items: center; padding: 0 10px 2px 16px; height: 40px; font-size: 20px; color: #fff; white-space: pre; background: #262626; text-shadow: 0 0 1px currentColor; }
.legend i, .legend-line i { width: 8px; height: 8px; margin-right: 6px; background: currentColor; }
.legend .cyan { color: #5fbecd; }
.legend .sand { color: #8e7450; }
.legend-line { position: absolute; left: 10px; background: #000; }
.macd { top: 1035px; }
.rsi { top: 1253px; }
.tooltip { position: absolute; left: 1862px; top: 165px; width: 256px; height: 271px; padding: 8px 10px 0; background: rgba(0, 0, 0, .7); color: #fff; font-size: 22px; line-height: 28px; text-shadow: 0 0 1px currentColor; }
.tooltip strong { display: block; height: 35px; padding: 0 4px; line-height: 28px; font-weight: normal; }
.tooltip dl { border-top: 1px dotted #999; padding: 5px 5px 0 4px; height: 120px; }
.tooltip dl div { display: flex; justify-content: space-between; }
.green { color: #008000; }
.red { color: #e80000; }
.pink { color: #f9f; }

.dock { display: flex; justify-content: center; height: 43px; background: linear-gradient(#2f3640, #454d56); color: #8b96a6; font-size: 22px; font-weight: bold; padding-right: 30px; }
.dock nav { display: flex; background: linear-gradient(#5e6770, #3b434d); border-top: 2px solid #6c757e; }
.dock nav button { padding: 0 26px 3px; border-right: 1px solid #5a646f; height: 40px; }
.dock nav button:last-child { padding: 0 34px 3px; }
.group { display: flex; gap: 8px; padding: 5px 14px; }
.group button { width: 32px; height: 32px; border-radius: 6px; background: linear-gradient(#50555b, #33383e); box-shadow: 0 2px 3px #22272d; }
.group .icon { width: 32px; height: 32px; }
.group .on { background: linear-gradient(#0868e0, #02a8f8); }
</style>
